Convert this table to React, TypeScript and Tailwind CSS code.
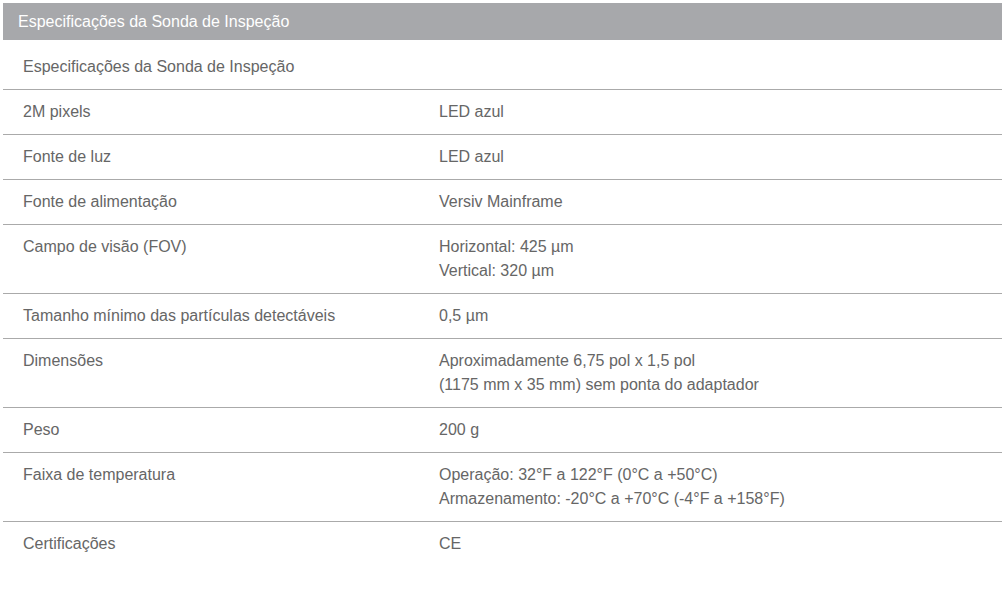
import React from 'react';

const rows: { label: string; value: string[] }[] = [
  { label: '2M pixels', value: ['LED azul'] },
  { label: 'Fonte de luz', value: ['LED azul'] },
  { label: 'Fonte de alimentação', value: ['Versiv Mainframe'] },
  { label: 'Campo de visão (FOV)', value: ['Horizontal: 425 µm', 'Vertical: 320 µm'] },
  { label: 'Tamanho mínimo das partículas detectáveis', value: ['0,5 µm'] },
  { label: 'Dimensões', value: ['Aproximadamente 6,75 pol x 1,5 pol', '(1175 mm x 35 mm) sem ponta do adaptador'] },
  { label: 'Peso', value: ['200 g'] },
  { label: 'Faixa de temperatura', value: ['Operação: 32°F a 122°F (0°C a +50°C)', 'Armazenamento: -20°C a +70°C (-4°F a +158°F)'] },
  { label: 'Certificações', value: ['CE'] },
];

export default function App() {
  return (
    <div className="min-h-[604px] bg-white px-[3px] pt-[3px] text-base text-[#666] font-[family-name:'Liberation_Sans',Arial,sans-serif]">
      {/* Section header */}
      <div className="h-[37px] bg-[#a7a8ab] pl-[15px] flex items-center text-white">
        Especificações da Sonda de Inspeção
      </div>

      <div className="mt-[5px]">
        <div className="px-5 py-[10px] leading-6 border-b border-[#aaa]">
          Especificações da Sonda de Inspeção
        </div>
        {rows.map((row, i) => (
          <div
            key={i}
            className={`grid grid-cols-[416px_1fr] leading-6 ${i < rows.length - 1 ? 'border-b border-[#aaa]' : ''}`}
          >
            <div className="pl-5 py-[10px]">{row.label}</div>
            <div className="pl-5 py-[10px]">
              {row.value.map((v, j) => (
                <div key={j}>{v}</div>
              ))}
            </div>
          </div>
        ))}
      </div>
    </div>
  );
}
